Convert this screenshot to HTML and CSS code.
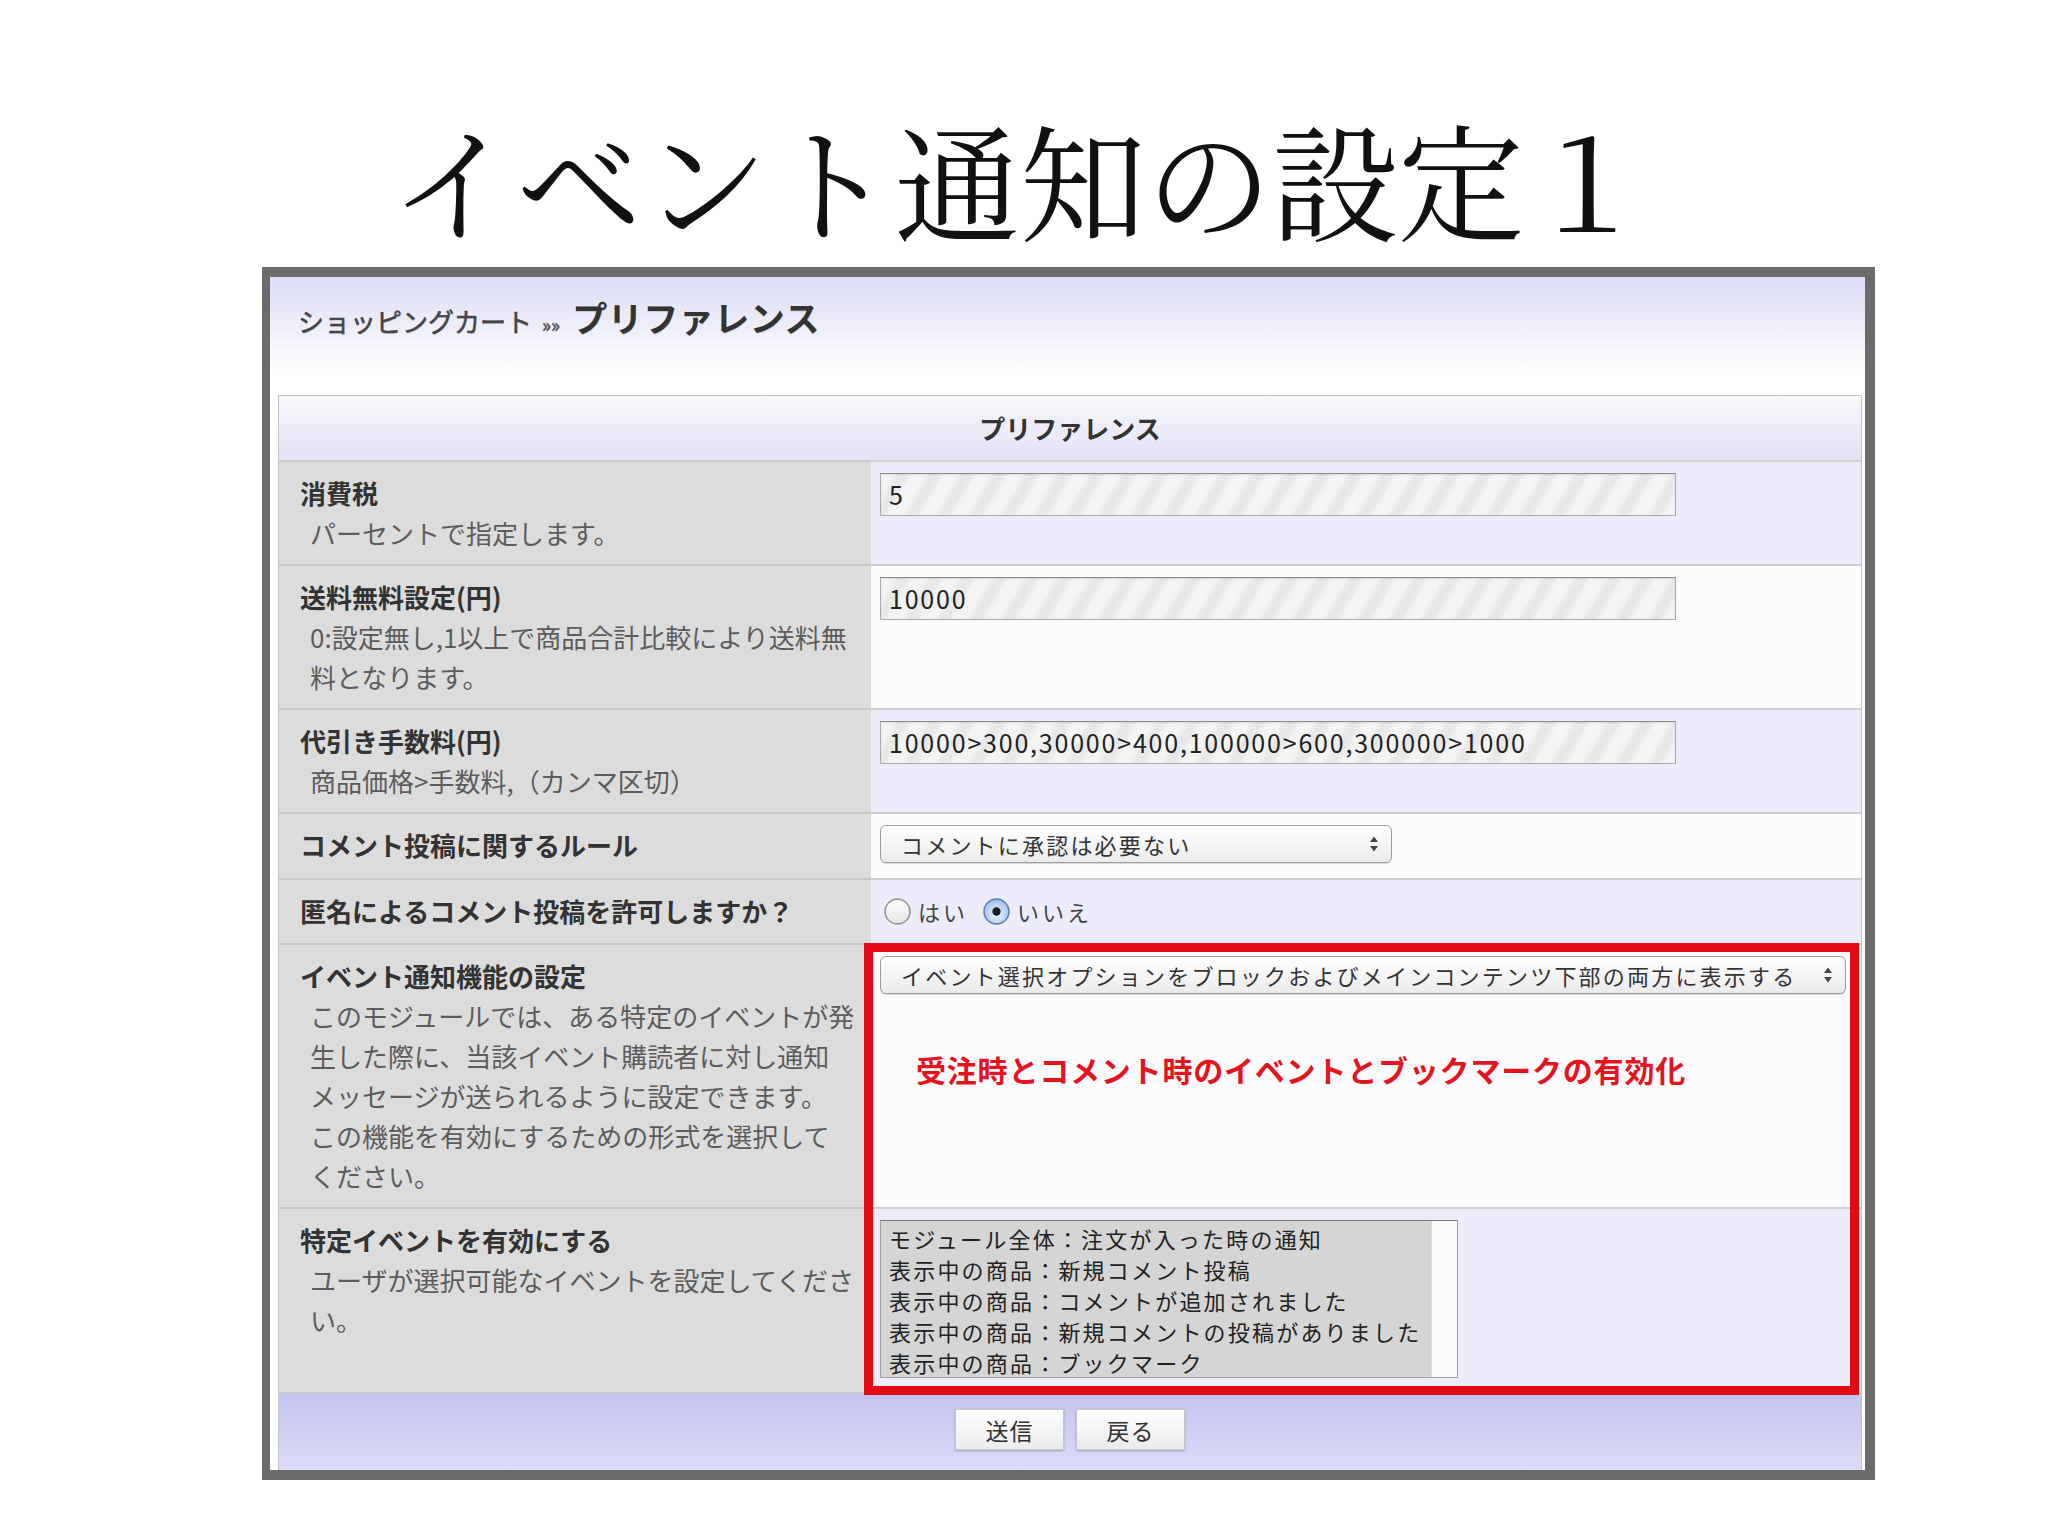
FILE: index.html
```html
<!DOCTYPE html>
<html lang="ja">
<head>
<meta charset="utf-8">
<title>イベント通知の設定１</title>
<link rel="stylesheet" href="styles.css">
</head>
<body>
<div class="slide">
  <h1 class="title">イベント通知の設定１</h1>
  <div class="frame">
    <div class="panel">
      <div class="crumb"><span class="crumb-root">ショッピングカート</span><span class="crumb-sep">»»</span><span class="crumb-cur">プリファレンス</span></div>
      <div class="form">
        <div class="head">プリファレンス</div>

        <div class="lab r1"><div class="lab-title">消費税</div><div class="lab-desc">パーセントで指定します。</div></div>
        <div class="val alt r1"><div class="input">5</div></div>

        <div class="lab r2"><div class="lab-title">送料無料設定(円)</div><div class="lab-desc">0:設定無し,1以上で商品合計比較により送料無<br>料となります。</div></div>
        <div class="val r2"><div class="input">10000</div></div>

        <div class="lab r3"><div class="lab-title">代引き手数料(円)</div><div class="lab-desc">商品価格&gt;手数料,（カンマ区切）</div></div>
        <div class="val alt r3"><div class="input">10000&gt;300,30000&gt;400,100000&gt;600,300000&gt;1000</div></div>

        <div class="lab r4"><div class="lab-title">コメント投稿に関するルール</div></div>
        <div class="val r4">
          <div class="select select-short"><span>コメントに承認は必要ない</span><svg class="arrows" width="10" height="18" viewBox="0 0 10 18"><path d="M5 1.5 L9 7 H1 Z M5 16.5 L9 11 H1 Z" fill="#444"/></svg></div>
        </div>

        <div class="lab r5"><div class="lab-title">匿名によるコメント投稿を許可しますか？</div></div>
        <div class="val alt r5">
          <div class="radios">
            <svg class="radio" width="29" height="29" viewBox="0 0 28 28"><defs><linearGradient id="rg1" x1="0" y1="0" x2="0" y2="1"><stop offset="0" stop-color="#ffffff"/><stop offset="1" stop-color="#e6e6e6"/></linearGradient></defs><circle cx="14" cy="14" r="12" fill="url(#rg1)" stroke="#9a9a9a" stroke-width="1.6"/></svg>
            <span class="radio-label">はい</span>
            <svg class="radio radio-on" width="29" height="29" viewBox="0 0 28 28"><defs><radialGradient id="rg2" cx="0.5" cy="0.6" r="0.6"><stop offset="0" stop-color="#eef6ff"/><stop offset="1" stop-color="#9cc0ea"/></radialGradient></defs><circle cx="14" cy="14" r="12" fill="url(#rg2)" stroke="#5f86b8" stroke-width="1.6"/><circle cx="14" cy="14" r="4" fill="#1d1d1d"/></svg>
            <span class="radio-label">いいえ</span>
          </div>
        </div>

        <div class="lab r6"><div class="lab-title">イベント通知機能の設定</div><div class="lab-desc">このモジュールでは、ある特定のイベントが発<br>生した際に、当該イベント購読者に対し通知<br>メッセージが送られるように設定できます。<br>この機能を有効にするための形式を選択して<br>ください。</div></div>
        <div class="val r6">
          <div class="select select-long"><span>イベント選択オプションをブロックおよびメインコンテンツ下部の両方に表示する</span><svg class="arrows" width="10" height="18" viewBox="0 0 10 18"><path d="M5 1.5 L9 7 H1 Z M5 16.5 L9 11 H1 Z" fill="#444"/></svg></div>
          <div class="note">受注時とコメント時のイベントとブックマークの有効化</div>
        </div>

        <div class="lab r7"><div class="lab-title">特定イベントを有効にする</div><div class="lab-desc">ユーザが選択可能なイベントを設定してくださ<br>い。</div></div>
        <div class="val alt r7">
          <div class="listbox">
            <div class="opts">
              <div class="opt">モジュール全体：注文が入った時の通知</div>
              <div class="opt">表示中の商品：新規コメント投稿</div>
              <div class="opt">表示中の商品：コメントが追加されました</div>
              <div class="opt">表示中の商品：新規コメントの投稿がありました</div>
              <div class="opt">表示中の商品：ブックマーク</div>
            </div>
            <div class="bar"></div>
          </div>
        </div>

        <div class="highlight"></div>

        <div class="foot">
          <button class="btn" type="button">送信</button>
          <button class="btn" type="button">戻る</button>
        </div>
      </div>
    </div>
  </div>
</div>
</body>
</html>
```

FILE: styles.css
```css
body {
  margin: 0;
  background: #ffffff;
  font-family: "Noto Sans CJK JP", "Noto Sans", sans-serif;
}

.slide {
  width: 2048px;
  height: 1536px;
  overflow: hidden;
}

.title {
  margin: 107px 0 0;
  padding-right: 8px;
  text-align: center;
  font-family: "Noto Serif CJK JP", "Noto Sans CJK JP", serif;
  font-weight: 400;
  font-size: 126px;
  line-height: 142px;
  color: #111111;
}

.frame {
  margin: 18px 0 0 262px;
  width: 1613px;
  box-sizing: border-box;
  border-style: solid;
  border-color: #6b6b6b;
  border-width: 10px 10px 10px 8px;
  background: #ffffff;
}

.panel {
  background: linear-gradient(#dcdcf6 0px, #ffffff 95px);
  padding: 0 3px 0 8px;
}

.crumb {
  height: 118px;
  box-sizing: border-box;
  padding: 18px 0 0 20px;
  line-height: 44px;
  white-space: nowrap;
  text-shadow: 0 1px 1px rgba(0, 0, 0, 0.15);
}

.crumb-root {
  font-size: 26px;
  color: #444444;
  -webkit-text-stroke: 0.5px #444444;
}

.crumb-sep {
  font-size: 19px;
  color: #555555;
  -webkit-text-stroke: 0.5px #555555;
  margin: 0 12px 0 10px;
}

.crumb-cur {
  font-size: 35px;
  font-weight: 700;
  color: #333333;
  letter-spacing: 0.5px;
}

.form {
  display: grid;
  grid-template-columns: 592px 990px;
  border: 1px solid #c4c4c4;
  border-bottom: none;
}

.head {
  grid-row: 1;
  grid-column: 1 / -1;
  height: 64px;
  line-height: 64px;
  text-align: center;
  font-size: 26px;
  font-weight: 700;
  color: #333333;
  background: linear-gradient(#f8f8fc, #e2e2f6);
}

.lab {
  grid-column: 1;
  background: #dcdcdc;
  border-top: 2px solid #c8c8c8;
  padding: 11px 0 11px 21px;
  line-height: 40px;
  font-size: 26px;
  white-space: nowrap;
  overflow: hidden;
}

.lab-title {
  font-weight: 700;
  color: #333333;
}

.lab-desc {
  color: #5c5c5c;
  padding-left: 10px;
}

.val {
  grid-column: 2;
  border-top: 2px solid #d0d0d0;
  padding: 11px 9px 11px 9px;
  background: #fcfcff;
}

.val.alt {
  background: #ececfa;
}

.r1 { grid-row: 2; }
.r2 { grid-row: 3; }
.r3 { grid-row: 4; }
.r4 { grid-row: 5; padding-bottom: 13px; }
.r5 { grid-row: 6; padding-bottom: 12px; }
.r6 { grid-row: 7; }
.r7 { grid-row: 8; }

.input {
  width: 796px;
  height: 43px;
  box-sizing: border-box;
  border: 1px solid #ababab;
  border-top-color: #8a8a8a;
  padding-left: 8px;
  font-size: 25px;
  letter-spacing: 1.8px;
  line-height: 41px;
  color: #222222;
  white-space: nowrap;
  background: repeating-linear-gradient(120deg, #f4f4f4 0px, #f4f4f4 10px, #e8e8e8 16px, #e8e8e8 22px, #f4f4f4 28px);
  box-shadow: inset 0 1px 2px rgba(0, 0, 0, 0.1);
}

.select {
  height: 38px;
  box-sizing: border-box;
  border: 1px solid #9c9c9c;
  border-radius: 6px;
  background: linear-gradient(#ffffff, #ebebeb);
  box-shadow: 0 1px 1px rgba(0, 0, 0, 0.15);
  display: flex;
  align-items: center;
  justify-content: space-between;
  padding: 0 12px 0 20px;
  font-size: 22px;
  letter-spacing: 2.2px;
  color: #333333;
  white-space: nowrap;
}

.select-short {
  width: 512px;
}

.select-long {
  width: 966px;
}

.arrows {
  flex: none;
}

.radios {
  display: flex;
  align-items: center;
  height: 40px;
  font-size: 22px;
  letter-spacing: 3px;
  color: #444444;
}

.radio {
  flex: none;
  margin-left: 3px;
}

.radio-on {
  margin-left: 14px;
}

.radio-label {
  margin-left: 6px;
}

.note {
  margin: 55px 0 0 36px;
  font-size: 30px;
  line-height: 40px;
  font-weight: 700;
  letter-spacing: 0.8px;
  color: #e3141e;
  white-space: nowrap;
}

.listbox {
  width: 578px;
  height: 158px;
  box-sizing: border-box;
  border: 1px solid #9e9e9e;
  border-top-color: #7a7a7a;
  display: flex;
  background: #ffffff;
  margin-bottom: 3px;
}

.opts {
  flex: 1;
  background: #d5d5d5;
  padding: 2px 0 0 8px;
  font-size: 22px;
  letter-spacing: 2.2px;
  line-height: 31px;
  color: #222222;
  white-space: nowrap;
  overflow: hidden;
}

.bar {
  width: 25px;
  background: #fbfbfb;
  border-left: 1px solid #dddddd;
}

.highlight {
  grid-row: 7 / 9;
  grid-column: 2;
  z-index: 2;
  margin: 0 2px -3px -7px;
  border: 9px solid #e20b14;
  pointer-events: none;
}

.foot {
  grid-row: 9;
  grid-column: 1 / -1;
  display: flex;
  justify-content: center;
  gap: 12px;
  padding: 15px 0 20px;
  border-top: 2px solid #c8c8d8;
  background: linear-gradient(#c3c3f2, #dcdcf8);
}

.btn {
  width: 109px;
  height: 41px;
  box-sizing: border-box;
  border: 1px solid #c6c6c6;
  background: linear-gradient(#ffffff, #ebebeb);
  box-shadow: 0 1px 2px rgba(0, 0, 0, 0.25);
  font-family: "Noto Sans CJK JP", "Noto Sans", sans-serif;
  font-size: 23px;
  letter-spacing: 1px;
  color: #333333;
  padding: 0;
}
```
